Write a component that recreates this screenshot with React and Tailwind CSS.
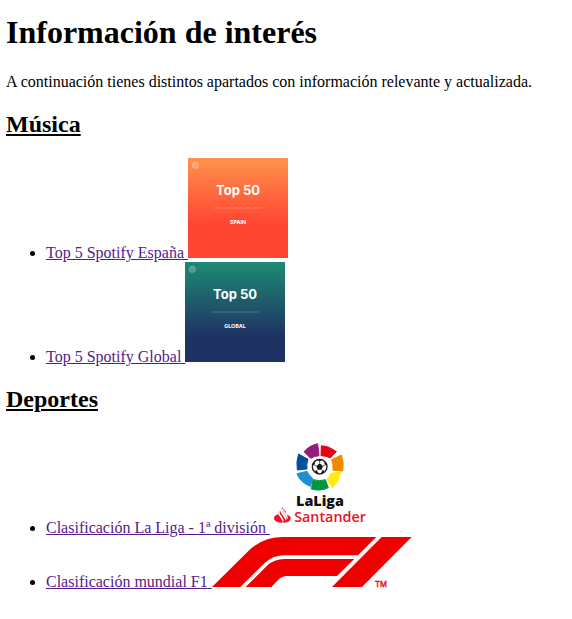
import React from "react";

function PlaylistCover({ id, top, bottom, fadeEnd, label }) {
  return (
    <svg
      className="inline align-baseline w-[100px] h-[100px]"
      viewBox="0 0 300 300"
      role="img"
      aria-label={label}
    >
      <defs>
        <linearGradient id={id} x1="0" y1="0" x2="0" y2="1">
          <stop offset="0" stopColor={top} />
          <stop offset={fadeEnd} stopColor={bottom} />
        </linearGradient>
      </defs>
      <rect width="300" height="300" fill={`url(#${id})`} />
      <g fill="none" stroke="#fff" opacity="0.4">
        <circle cx="22" cy="22" r="9" strokeWidth="3" fill="#fff" fillOpacity="0.3" />
        <path d="M16 19q6-3 12 1M17 24q5-2 10 1" strokeWidth="2" />
      </g>
      <text x="150" y="112" textAnchor="middle" fill="#fff" className="font-['Inter',sans-serif] font-bold text-[39px]">
        Top 50
      </text>
      <path d="M78 150H222" stroke="#fff" strokeWidth="4" opacity="0.15" />
      <text x="150" y="199" textAnchor="middle" fill="#fff" className="font-['Inter',sans-serif] font-bold text-[16px]">
        {label}
      </text>
    </svg>
  );
}

function Wedge({ color, d }) {
  return <path fill={color} stroke={color} strokeWidth="3" d={d} />;
}

function LaLigaLogo() {
  return (
    <svg
      className="inline align-baseline w-[100px] h-[100px]"
      viewBox="24 3 300 300"
      role="img"
      aria-label="LaLiga Santander"
    >
      <Wedge color="#e30613" d="M178 41Q203 42 223 59L205 78Q192 71 177 71Z" />
      <Wedge color="#931b80" d="M126 59Q143 40 167 35L171 71Q157 72 146 79Z" />
      <Wedge color="#0050a0" d="M110 66L138 82Q132 97 135 111L106 114Q102 88 110 66Z" />
      <Wedge color="#1e8fd5" d="M105 125L135 118Q141 131 152 139L145 163Q115 152 105 125Z" />
      <Wedge color="#009640" d="M153 143Q173 149 190 143L199 167Q174 179 148 171Z" />
      <Wedge color="#ffed0f" d="M206 124L235 121Q232 150 211 167L195 142Q203 134 206 124Z" />
      <Wedge color="#f08a00" d="M209 83L238 69Q247 92 242 117L213 115Q214 97 209 83Z" />
      <circle cx="173" cy="104" r="22" fill="#fff" stroke="#1a1a1a" strokeWidth="4" />
      <path fill="#1a1a1a" d="M173 94l10 8-4 11h-12l-4-11zM164 84l9 4 9-4-9-3zM151 98l6 1 3-9-5 2zM195 98l-6 1-3-9 5 2zM159 121l2-7 8 7-2 5zM187 121l-2-7-8 7 2 5z" />
      <path stroke="#1a1a1a" strokeWidth="2" d="M173 94v-8M163 102l-8-4M183 102l8-4M167 113l-5 5M179 113l5 5" />
      <text x="174" y="221" textAnchor="middle" fill="#111" className="font-['Open_Sans',sans-serif] font-extrabold text-[43px]">
        LaLiga
      </text>
      <path
        fill="#ec1226"
        d="M60 224Q57 233 64 241L72 252Q76 258 74 264Q80 257 75 249L67 238Q60 231 60 224ZM51 238Q46 246 53 253L60 264Q63 268 61 272Q39 272 36 261Q34 251 49 247Q47 242 51 238ZM72 238Q70 243 75 248Q88 252 86 261Q83 272 62 272Q67 266 62 258L54 246Q52 241 54 235Q55 241 60 247L67 257Q71 262 70 266Q76 260 71 252L63 241Q58 234 61 224Q62 231 69 237Z"
      />
      <text x="204" y="270" textAnchor="middle" fill="#ec1226" className="font-['Open_Sans',sans-serif] font-semibold text-[43px]">
        Santander
      </text>
    </svg>
  );
}

function F1Logo() {
  return (
    <svg
      className="inline overflow-visible align-baseline w-[200px] h-[50px]"
      viewBox="36 21 600 150"
      role="img"
      aria-label="F1"
    >
      <g fill="#ee0000">
        <path d="M36 171L146 62Q188 21 250 21H529L474 76H254Q220 76 195 98L121 171Z" />
        <path d="M137 171L201 107Q222 87 254 87H463L411 138H262Q246 138 235 149L214 171Z" />
        <path d="M545 21H635L486 171H396Z" />
        <text x="525" y="171" className="font-['Liberation_Sans',Arial,sans-serif] text-[25px]" stroke="#ee0000">
          TM
        </text>
      </g>
    </svg>
  );
}

function Section({ title, children }) {
  return (
    <section>
      <h2 className="mb-5 text-[24px] leading-[27px] font-bold underline">{title}</h2>
      <ul className="mb-5 list-disc pl-10">{children}</ul>
    </section>
  );
}

function LinkItem({ text, children }) {
  return (
    <li>
      <a href="#" className="text-[#551a8b] underline">
        {text} {children}
      </a>
    </li>
  );
}

export default function App() {
  return (
    <main className="bg-white px-1.5 pt-3.5 font-['Liberation_Serif','Times_New_Roman',serif] text-[16px] leading-[18px] text-black">
      <h1 className="mb-[22px] text-[32px] leading-[37px] font-bold">Información de interés</h1>
      <p className="mb-5">
        A continuación tienes distintos apartados con información relevante y actualizada.
      </p>
      <Section title="Música">
        <LinkItem text="Top 5 Spotify España">
          <PlaylistCover id="cover-spain" top="#ff934c" bottom="#ff4632" fadeEnd="0.65" label="SPAIN" />
        </LinkItem>
        <LinkItem text="Top 5 Spotify Global">
          <PlaylistCover id="cover-global" top="#1e8a74" bottom="#1e3264" fadeEnd="0.75" label="GLOBAL" />
        </LinkItem>
      </Section>
      <Section title="Deportes">
        <LinkItem text="Clasificación La Liga - 1ª división">
          <LaLigaLogo />
        </LinkItem>
        <LinkItem text="Clasificación mundial F1">
          <F1Logo />
        </LinkItem>
      </Section>
    </main>
  );
}
